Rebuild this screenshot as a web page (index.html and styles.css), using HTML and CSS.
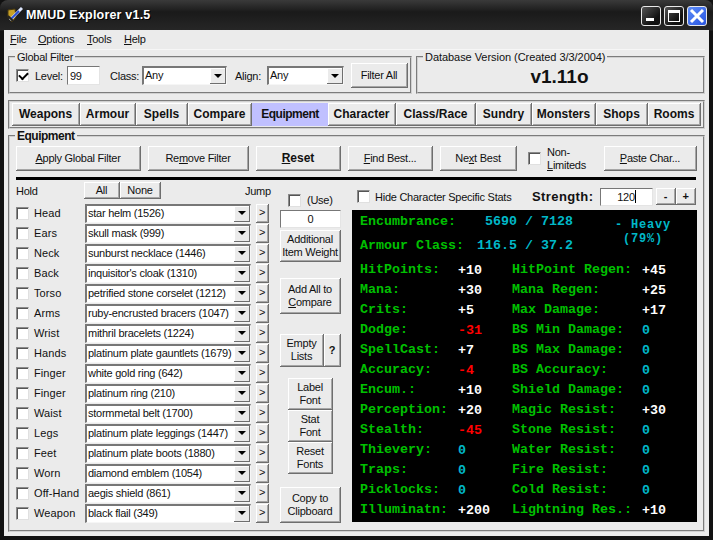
FILE: index.html
```html
<!DOCTYPE html>
<html lang="en">
<head>
    <meta charset="UTF-8">
    <meta name="viewport" content="width=device-width, initial-scale=1.0">
    <title>MMUD Explorer v1.5</title>
    <link rel="stylesheet" href="styles.css">
</head>
<body>
<div class="window">
    <div class="titlebar">
        <svg class="app-icon" width="16" height="18" viewBox="0 0 16 18">
            <path d="M1 4 L8 3 L9 11 L5 16 L1 11 Z" fill="#c9a227" stroke="#4a3a10"/>
            <path d="M3 14 L15 2" stroke="#dfe8ff" stroke-width="3"/>
            <path d="M4 13 L12 5" stroke="#2a4fd0" stroke-width="2"/>
            <path d="M1 10 L6 15" stroke="#222" stroke-width="2"/>
        </svg>
        <span class="title-text">MMUD Explorer v1.5</span>
        <div class="win-buttons">
            <div class="win-btn"><span class="min-glyph"></span></div>
            <div class="win-btn"><span class="max-glyph"></span></div>
            <div class="win-btn close">
                <svg width="16" height="16" viewBox="0 0 16 16"><path d="M2 2 L14 14 M14 2 L2 14" stroke="#fff" stroke-width="3"/></svg>
            </div>
        </div>
    </div>
    <div class="client">
        <div class="menu">
            <span><u>F</u>ile</span>
            <span><u>O</u>ptions</span>
            <span><u>T</u>ools</span>
            <span><u>H</u>elp</span>
        </div>

        <div class="top-row">
            <fieldset class="group global-filter">
                <legend>Global Filter</legend>
                <div class="filter-row">
                    <span class="check checked"></span>
                    <span class="lvl-label">Level:</span>
                    <span class="field lvl-field">99</span>
                    <span class="class-label">Class:</span>
                    <div class="combo class-combo"><span class="combo-text">Any</span><span class="combo-btn"></span></div>
                    <span class="align-label">Align:</span>
                    <div class="combo align-combo"><span class="combo-text">Any</span><span class="combo-btn"></span></div>
                    <div class="btn filter-all">Filter All</div>
                </div>
            </fieldset>
            <fieldset class="group db-version">
                <legend>Database Version (Created 3/3/2004)</legend>
                <div class="version">v1.11o</div>
            </fieldset>
        </div>

        <div class="tabs">
            <div class="btn tab tab-weapons">Weapons</div>
            <div class="btn tab tab-armour">Armour</div>
            <div class="btn tab tab-spells">Spells</div>
            <div class="btn tab tab-compare">Compare</div>
            <div class="btn tab tab-equipment active">Equipment</div>
            <div class="btn tab tab-character">Character</div>
            <div class="btn tab tab-class">Class/Race</div>
            <div class="btn tab tab-sundry">Sundry</div>
            <div class="btn tab tab-monsters">Monsters</div>
            <div class="btn tab tab-shops">Shops</div>
            <div class="btn tab tab-rooms">Rooms</div>
        </div>

        <fieldset class="group equipment">
            <legend>Equipment</legend>
            <div class="eq-buttons">
                <div class="btn b-apply"><span><u>A</u>pply Global Filter</span></div>
                <div class="btn b-remove"><span>Re<u>m</u>ove Filter</span></div>
                <div class="btn b-reset"><span><u>R</u>eset</span></div>
                <div class="btn b-find"><span><u>F</u>ind Best...</span></div>
                <div class="btn b-next"><span>Ne<u>x</u>t Best</span></div>
                <div class="nonlim"><span class="check"></span><span class="nonlim-text">Non-<br><u>L</u>imiteds</span></div>
                <div class="btn b-paste"><span><u>P</u>aste Char...</span></div>
            </div>
            <div class="rule"></div>

            <div class="eq-body">
                <div class="slots">
                    <div class="slots-head">
                        <span class="hold">Hold</span>
                        <div class="all-none"><div class="btn b-all">All</div><div class="btn b-none">None</div></div>
                        <span class="jump">Jump</span>
                    </div>
                    <div class="slot"><span class="check"></span><span class="slot-name">Head</span><div class="combo"><span class="combo-text">star helm (1526)</span><span class="combo-btn"></span></div><div class="btn jump-btn">&gt;</div></div>
                    <div class="slot"><span class="check"></span><span class="slot-name">Ears</span><div class="combo"><span class="combo-text">skull mask (999)</span><span class="combo-btn"></span></div><div class="btn jump-btn">&gt;</div></div>
                    <div class="slot"><span class="check"></span><span class="slot-name">Neck</span><div class="combo"><span class="combo-text">sunburst necklace (1446)</span><span class="combo-btn"></span></div><div class="btn jump-btn">&gt;</div></div>
                    <div class="slot"><span class="check"></span><span class="slot-name">Back</span><div class="combo"><span class="combo-text">inquisitor's cloak (1310)</span><span class="combo-btn"></span></div><div class="btn jump-btn">&gt;</div></div>
                    <div class="slot"><span class="check"></span><span class="slot-name">Torso</span><div class="combo"><span class="combo-text">petrified stone corselet (1212)</span><span class="combo-btn"></span></div><div class="btn jump-btn">&gt;</div></div>
                    <div class="slot"><span class="check"></span><span class="slot-name">Arms</span><div class="combo"><span class="combo-text">ruby-encrusted bracers (1047)</span><span class="combo-btn"></span></div><div class="btn jump-btn">&gt;</div></div>
                    <div class="slot"><span class="check"></span><span class="slot-name">Wrist</span><div class="combo"><span class="combo-text">mithril bracelets (1224)</span><span class="combo-btn"></span></div><div class="btn jump-btn">&gt;</div></div>
                    <div class="slot"><span class="check"></span><span class="slot-name">Hands</span><div class="combo"><span class="combo-text">platinum plate gauntlets (1679)</span><span class="combo-btn"></span></div><div class="btn jump-btn">&gt;</div></div>
                    <div class="slot"><span class="check"></span><span class="slot-name">Finger</span><div class="combo"><span class="combo-text">white gold ring (642)</span><span class="combo-btn"></span></div><div class="btn jump-btn">&gt;</div></div>
                    <div class="slot"><span class="check"></span><span class="slot-name">Finger</span><div class="combo"><span class="combo-text">platinum ring (210)</span><span class="combo-btn"></span></div><div class="btn jump-btn">&gt;</div></div>
                    <div class="slot"><span class="check"></span><span class="slot-name">Waist</span><div class="combo"><span class="combo-text">stormmetal belt (1700)</span><span class="combo-btn"></span></div><div class="btn jump-btn">&gt;</div></div>
                    <div class="slot"><span class="check"></span><span class="slot-name">Legs</span><div class="combo"><span class="combo-text">platinum plate leggings (1447)</span><span class="combo-btn"></span></div><div class="btn jump-btn">&gt;</div></div>
                    <div class="slot"><span class="check"></span><span class="slot-name">Feet</span><div class="combo"><span class="combo-text">platinum plate boots (1880)</span><span class="combo-btn"></span></div><div class="btn jump-btn">&gt;</div></div>
                    <div class="slot"><span class="check"></span><span class="slot-name">Worn</span><div class="combo"><span class="combo-text">diamond emblem (1054)</span><span class="combo-btn"></span></div><div class="btn jump-btn">&gt;</div></div>
                    <div class="slot"><span class="check"></span><span class="slot-name">Off-Hand</span><div class="combo"><span class="combo-text">aegis shield (861)</span><span class="combo-btn"></span></div><div class="btn jump-btn">&gt;</div></div>
                    <div class="slot"><span class="check"></span><span class="slot-name">Weapon</span><div class="combo"><span class="combo-text">black flail (349)</span><span class="combo-btn"></span></div><div class="btn jump-btn">&gt;</div></div>
                </div>

                <div class="mid">
                    <div class="use-row"><span class="check"></span><span>(Use)</span></div>
                    <div class="field weight-field">0</div>
                    <div class="btn b-weight"><span>Additional<br>Item Weight</span></div>
                    <div class="btn b-addall"><span>Add All to<br><u>C</u>ompare</span></div>
                    <div class="empty-row"><div class="btn b-empty"><span>Empty<br>Lists</span></div><div class="btn b-help">?</div></div>
                    <div class="font-btns">
                        <div class="btn b-font"><span>Label<br>Font</span></div>
                        <div class="btn b-font"><span>Stat<br>Font</span></div>
                        <div class="btn b-font"><span>Reset<br>Fonts</span></div>
                    </div>
                    <div class="btn b-copy"><span>Copy to<br>Clipboard</span></div>
                </div>

                <div class="right">
                    <div class="right-head">
                        <span class="check"></span>
                        <span class="hide-text">Hide Character Specific Stats</span>
                        <span class="strength">Strength:</span>
                        <span class="field str-field">120<i class="caret"></i></span>
                        <div class="btn b-step">-</div>
                        <div class="btn b-step">+</div>
                    </div>
                    <div class="stats">
                        <div class="stats-top">
                            <div class="top-lines">
                                <div class="top-line"><span class="lbl">Encumbrance:</span><span class="cy top-val">5690 / 7128</span></div>
                                <div class="top-line"><span class="lbl">Armour Class:</span><span class="cy top-val">116.5 / 37.2</span></div>
                            </div>
                            <div class="cy heavy">- Heavy<br>(79%)</div>
                        </div>
                        <div class="stat-grid">
                            <span class="lbl">HitPoints:</span><span class="pos">+10</span><span class="lbl">HitPoint Regen:</span><span class="pos">+45</span>
                            <span class="lbl">Mana:</span><span class="pos">+30</span><span class="lbl">Mana Regen:</span><span class="pos">+25</span>
                            <span class="lbl">Crits:</span><span class="pos">+5</span><span class="lbl">Max Damage:</span><span class="pos">+17</span>
                            <span class="lbl">Dodge:</span><span class="neg">-31</span><span class="lbl">BS Min Damage:</span><span class="cy">0</span>
                            <span class="lbl">SpellCast:</span><span class="pos">+7</span><span class="lbl">BS Max Damage:</span><span class="cy">0</span>
                            <span class="lbl">Accuracy:</span><span class="neg">-4</span><span class="lbl">BS Accuracy:</span><span class="cy">0</span>
                            <span class="lbl">Encum.:</span><span class="pos">+10</span><span class="lbl">Shield Damage:</span><span class="cy">0</span>
                            <span class="lbl">Perception:</span><span class="pos">+20</span><span class="lbl">Magic Resist:</span><span class="pos">+30</span>
                            <span class="lbl">Stealth:</span><span class="neg">-45</span><span class="lbl">Stone Resist:</span><span class="cy">0</span>
                            <span class="lbl">Thievery:</span><span class="cy">0</span><span class="lbl">Water Resist:</span><span class="cy">0</span>
                            <span class="lbl">Traps:</span><span class="cy">0</span><span class="lbl">Fire Resist:</span><span class="cy">0</span>
                            <span class="lbl">Picklocks:</span><span class="cy">0</span><span class="lbl">Cold Resist:</span><span class="cy">0</span>
                            <span class="lbl">Illuminatn:</span><span class="pos">+200</span><span class="lbl">Lightning Res.:</span><span class="pos">+10</span>
                        </div>
                    </div>
                </div>
            </div>
        </fieldset>
    </div>
</div>
</body>
</html>
```

FILE: styles.css
```css
* {
    margin: 0;
    padding: 0;
    box-sizing: border-box;
}
html, body {
    width: 713px;
    height: 540px;
    overflow: hidden;
    background: #111;
}
body {
    font-family: "Liberation Sans", Arial, sans-serif;
    font-size: 11px;
    letter-spacing: -0.25px;
    color: #111;
}
.window {
    width: 713px;
    height: 540px;
    background: linear-gradient(#3a3a3a, #1a1a1a 12px, #262626 30px, #111 31px);
    border-radius: 8px 8px 0 0;
    padding: 0 4px 4px;
    display: flex;
    flex-direction: column;
}

/* title bar */
.titlebar {
    height: 30px;
    display: flex;
    align-items: center;
    padding-left: 3px;
}
.app-icon {
    margin-right: 3px;
}
.title-text {
    color: #fff;
    font-weight: bold;
    font-size: 12.5px;
    letter-spacing: 0.2px;
    text-shadow: 1px 1px 0 #000;
}
.win-buttons {
    margin-left: auto;
    margin-right: 2px;
    margin-top: 2px;
    display: flex;
    gap: 3px;
}
.win-btn {
    width: 20px;
    height: 20px;
    border: 1px solid #e8e8e8;
    border-radius: 3px;
    background: linear-gradient(135deg, #555, #111 70%);
    display: flex;
    align-items: center;
    justify-content: center;
}
.win-btn.close {
    background: linear-gradient(135deg, #5c8cf8, #2a55e0);
}
.min-glyph {
    width: 8px;
    height: 3px;
    background: #fff;
    margin-top: 7px;
    margin-right: 2px;
}
.max-glyph {
    width: 12px;
    height: 12px;
    border: 1px solid #fff;
    border-top-width: 3px;
}

/* client area */
.client {
    flex: 1;
    background: #ebebeb;
    display: flex;
    flex-direction: column;
    padding: 0 4px;
}
.menu {
    height: 20px;
    display: flex;
    align-items: center;
    padding: 0 0 2px 2px;
    border-bottom: 1px solid #f6f6f6;
}
.menu span:nth-child(1) { width: 28px; }
.menu span:nth-child(2) { width: 49px; }
.menu span:nth-child(3) { width: 37px; }

.group {
    border: 2px groove #d0d0d0;
    min-width: 0;
}
.group legend {
    margin-left: -1px;
    padding: 0 2px;
    line-height: 14px;
}
.top-row {
    display: flex;
    gap: 4px;
    height: 44px;
}
.global-filter {
    width: 404px;
    padding: 0 0 0 6px;
}
.filter-row {
    display: flex;
    align-items: center;
    height: 23px;
}
.lvl-label { margin-left: 6px; width: 32px; }
.lvl-field { width: 33px; height: 19px; padding-left: 2px; }
.class-label { margin-left: 10px; width: 32px; }
.class-combo { width: 85px; }
.align-label { margin-left: 8px; width: 32px; }
.align-combo { width: 77px; }
.filter-all { margin-left: 7px; width: 57px; height: 25px; }

.db-version {
    width: 289px;
    padding: 2px 0 0;
}
.db-version legend {
    margin-left: 5px;
    letter-spacing: -0.05px;
}
.version {
    text-align: center;
    font-size: 19px;
    font-weight: bold;
    letter-spacing: 0;
    line-height: 22px;
    padding-right: 2px;
}

/* widgets */
.btn {
    display: flex;
    align-items: center;
    justify-content: center;
    text-align: center;
    background: #ebebeb;
    border-right: 1px solid #6e6e6e;
    border-bottom: 1px solid #6e6e6e;
    box-shadow: inset 1px 1px 0 #fff, inset -1px -1px 0 #a6a6a6;
    line-height: 13px;
    flex: none;
}
.check {
    width: 13px;
    height: 13px;
    background: #fff;
    border: 1px solid #8a8a8a;
    border-right-color: #e0e0e0;
    border-bottom-color: #e0e0e0;
    box-shadow: inset 1px 1px 0 #555;
    flex: none;
}
.check.checked::after {
    content: "";
    display: block;
    width: 7px;
    height: 4px;
    margin: 2px 0 0 2px;
    border-left: 2px solid #000;
    border-bottom: 2px solid #000;
    transform: rotate(-45deg);
}
.field {
    background: #fff;
    border-top: 1px solid #777;
    border-left: 1px solid #777;
    border-right: 1px solid #e4e4e4;
    border-bottom: 1px solid #e4e4e4;
    display: flex;
    align-items: center;
    flex: none;
}
.combo {
    height: 19px;
    background: #fff;
    border-top: 2px solid #777;
    border-left: 2px solid #777;
    border-right: 1px solid #f6f6f6;
    border-bottom: 1px solid #f6f6f6;
    display: flex;
    align-items: stretch;
    flex: none;
}
.combo-text {
    flex: 1;
    padding-left: 1px;
    line-height: 14px;
    white-space: nowrap;
    overflow: hidden;
}
.combo-btn {
    width: 16px;
    background: #ebebeb;
    border-right: 1px solid #6e6e6e;
    border-bottom: 1px solid #6e6e6e;
    box-shadow: inset 1px 1px 0 #fff;
    display: flex;
    align-items: center;
    justify-content: center;
}
.combo-btn::after {
    content: "";
    border-left: 4px solid transparent;
    border-right: 4px solid transparent;
    border-top: 4px solid #000;
}

/* tabs */
.tabs {
    margin-top: 6px;
    height: 29px;
    border: 2px groove #d0d0d0;
    display: flex;
    padding: 1px 0 0 2px;
}
.tab {
    height: 23px;
    font-weight: bold;
    font-size: 12px;
    letter-spacing: 0;
}
.tab.active {
    background: #c0c0ff;
    box-shadow: none;
    border: none;
    letter-spacing: -0.5px;
}
.tab-weapons { width: 68px; }
.tab-armour { width: 56px; }
.tab-spells { width: 52px; }
.tab-compare { width: 64px; }
.tab-equipment { width: 76px; }
.tab-character { width: 68px; }
.tab-class { width: 80px; }
.tab-sundry { width: 56px; }
.tab-monsters { width: 64px; }
.tab-shops { width: 52px; }
.tab-rooms { width: 53px; }

/* equipment group */
.equipment {
    width: 697px;
    height: 403px;
    padding: 3px 6px 0;
}
.equipment legend {
    font-weight: bold;
    font-size: 12px;
    letter-spacing: -0.5px;
}
.eq-buttons {
    display: flex;
    height: 25px;
    align-items: stretch;
}
.b-apply { width: 125px; margin-right: 7px; }
.b-remove { width: 101px; margin-right: 7px; }
.b-reset { width: 85px; margin-right: 7px; font-weight: bold; font-size: 12px; letter-spacing: 0; }
.b-find { width: 85px; margin-right: 7px; }
.b-next { width: 77px; margin-right: 11px; }
.nonlim {
    width: 76px;
    display: flex;
    align-items: center;
    gap: 6px;
}
.nonlim-text {
    line-height: 13px;
}
.b-paste { width: 93px; }
.rule {
    height: 3px;
    background: #000;
    margin-top: 6px;
    width: 680px;
}
.eq-body {
    display: flex;
}
.slots {
    width: 262px;
    flex: none;
}
.slots-head {
    height: 23px;
    padding-top: 2px;
    display: flex;
    align-items: flex-start;
}
.hold {
    width: 68px;
    padding-top: 3px;
}
.all-none {
    display: flex;
    width: 161px;
}
.b-all { width: 36px; height: 17px; }
.b-none { width: 41px; height: 17px; }
.jump { padding-top: 3px; }
.slot {
    height: 20px;
    display: flex;
    align-items: center;
}
.slot-name {
    width: 56px;
    padding-left: 5px;
    letter-spacing: 0.1px;
    flex: none;
}
.slot .combo {
    width: 166px;
}
.jump-btn {
    width: 13px;
    height: 19px;
    margin-left: 5px;
}

/* middle buttons */
.mid {
    width: 61px;
    margin-left: 2px;
    margin-right: 11px;
    flex: none;
    display: flex;
    flex-direction: column;
    align-items: stretch;
}
.use-row {
    height: 30px;
    padding: 10px 0 0 8px;
    display: flex;
    align-items: center;
    gap: 6px;
}
.weight-field {
    height: 18px;
    justify-content: center;
}
.b-weight { height: 32px; margin-top: 2px; }
.b-addall { height: 36px; margin-top: 16px; }
.empty-row { display: flex; height: 33px; margin-top: 20px; }
.b-empty { width: 44px; }
.b-help { width: 17px; font-weight: bold; }
.font-btns {
    width: 45px;
    margin: 11px 0 0 8px;
}
.b-font { height: 32px; }
.b-copy { height: 36px; margin-top: 13px; }

/* stats panel */
.right {
    width: 345px;
    flex: none;
}
.right-head {
    height: 30px;
    padding-top: 3px;
    display: flex;
    align-items: center;
}
.right-head .check { margin-left: 5px; }
.hide-text { margin-left: 5px; width: 157px; }
.strength {
    width: 68px;
    font-size: 13px;
    font-weight: bold;
    letter-spacing: 0.4px;
}
.str-field {
    width: 53px;
    height: 18px;
    justify-content: center;
    margin-right: 3px;
}
.caret {
    width: 1px;
    height: 13px;
    background: #000;
}
.b-step {
    width: 20px;
    height: 17px;
    font-weight: bold;
}
.stats {
    width: 345px;
    height: 312px;
    background: #000;
    padding: 2px 0 0 8px;
    font-family: "Liberation Mono", "DejaVu Sans Mono", monospace;
    font-weight: bold;
    font-size: 13.33px;
    letter-spacing: 0;
    line-height: 20px;
}
.lbl { color: #00c000; }
.pos { color: #fff; }
.neg { color: #f00; }
.cy { color: #00b8c8; }
.stats-top {
    display: flex;
    height: 48px;
}
.top-lines {
    width: 213px;
}
.top-line {
    height: 24px;
    display: flex;
    justify-content: space-between;
}
.heavy {
    margin: 6px 0 0 42px;
    text-align: center;
    font-size: 12px;
    letter-spacing: 0.8px;
    line-height: 14px;
}
.stat-grid {
    display: grid;
    grid-template-columns: 98px 54px 130px 1fr;
    grid-auto-rows: 20px;
}
.stat-grid .pos, .stat-grid .neg, .stat-grid .cy {
    line-height: 22px;
}
```
